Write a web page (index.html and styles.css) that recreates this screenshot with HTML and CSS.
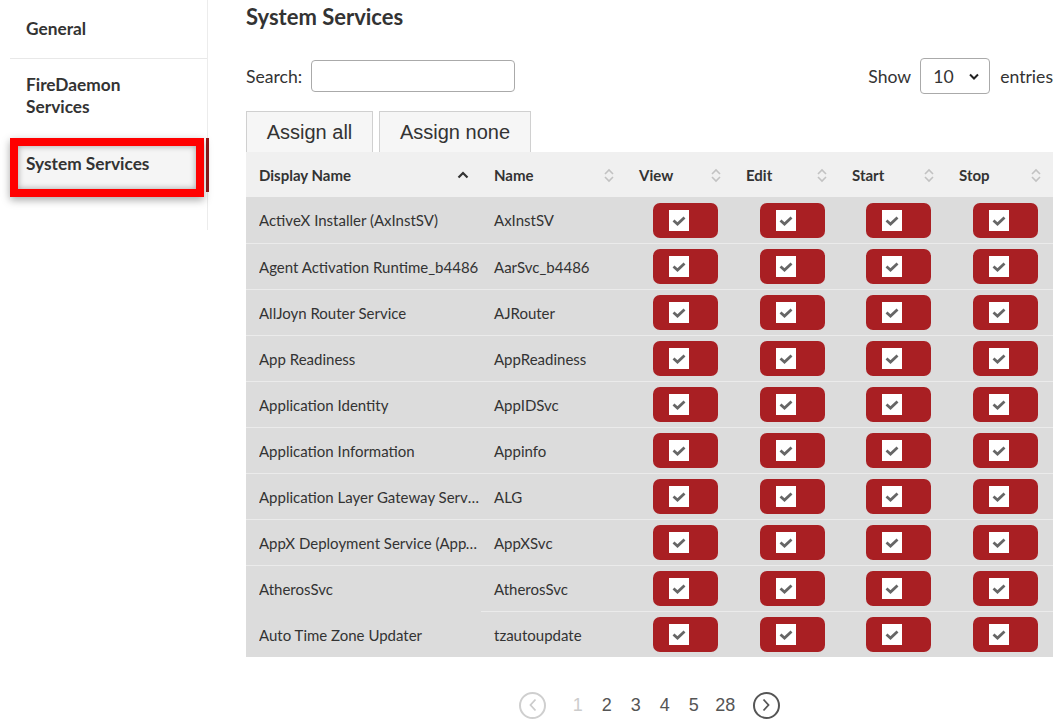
FILE: index.html
```html
<!DOCTYPE html>
<html>
<head>
<meta charset="utf-8">
<link rel="stylesheet" href="styles.css">
</head>
<body>
<div class="layout">
  <nav class="sidebar">
    <div class="nav-item nav-first">General</div>
    <div class="nav-item nav-second">FireDaemon<br>Services</div>
    <div class="nav-active-wrap">
      <div class="nav-active">System Services</div>
    </div>
  </nav>
  <main class="main">
    <h1 class="title">System Services</h1>
    <div class="toolbar">
      <label class="search">Search:<input class="search-input" type="text"></label>
      <div class="length">Show
        <div class="select-wrap">
          <select class="select"><option>10</option></select>
          <svg class="select-arrow" width="10" height="7" viewBox="0 0 10 7"><path d="M1 1.5 L5 5.5 L9 1.5" fill="none" stroke="#222" stroke-width="2"/></svg>
        </div>
        entries</div>
    </div>
    <div class="actions">
      <button class="btn btn-all">Assign all</button>
      <button class="btn btn-none">Assign none</button>
    </div>
    <table class="grid">
      <colgroup>
        <col class="c1"><col class="c2"><col class="c3"><col class="c4"><col class="c5"><col class="c6">
      </colgroup>
      <thead>
        <tr>
          <th class="h1"><div class="th"><span>Display Name</span><svg width="12" height="8" viewBox="0 0 12 8"><path d="M1.5 6.5 L6 2 L10.5 6.5" fill="none" stroke="#333" stroke-width="2.2"/></svg></div></th>
          <th><div class="th"><span>Name</span><svg class="sort" width="10" height="15" viewBox="0 0 10 15"><path d="M1 6 L5 2 L9 6 M1 9 L5 13 L9 9" fill="none" stroke="#c2c2c2" stroke-width="1.6"/></svg></div></th>
          <th><div class="th"><span>View</span><svg class="sort" width="10" height="15" viewBox="0 0 10 15"><path d="M1 6 L5 2 L9 6 M1 9 L5 13 L9 9" fill="none" stroke="#c2c2c2" stroke-width="1.6"/></svg></div></th>
          <th><div class="th"><span>Edit</span><svg class="sort" width="10" height="15" viewBox="0 0 10 15"><path d="M1 6 L5 2 L9 6 M1 9 L5 13 L9 9" fill="none" stroke="#c2c2c2" stroke-width="1.6"/></svg></div></th>
          <th><div class="th"><span>Start</span><svg class="sort" width="10" height="15" viewBox="0 0 10 15"><path d="M1 6 L5 2 L9 6 M1 9 L5 13 L9 9" fill="none" stroke="#c2c2c2" stroke-width="1.6"/></svg></div></th>
          <th><div class="th"><span>Stop</span><svg class="sort" width="10" height="15" viewBox="0 0 10 15"><path d="M1 6 L5 2 L9 6 M1 9 L5 13 L9 9" fill="none" stroke="#c2c2c2" stroke-width="1.6"/></svg></div></th>
        </tr>
      </thead>
      <tbody id="rows"></tbody>
    </table>
    <div class="pager">
      <span class="circle circle-prev"><svg width="10" height="14" viewBox="0 0 10 14"><path d="M7.5 1.5 L2.5 7 L7.5 12.5" fill="none" stroke="#ccc" stroke-width="1.8"/></svg></span>
      <span class="pg pg-off">1</span>
      <span class="pg">2</span>
      <span class="pg">3</span>
      <span class="pg">4</span>
      <span class="pg">5</span>
      <span class="pg pg-last">28</span>
      <span class="circle circle-next"><svg width="10" height="14" viewBox="0 0 10 14"><path d="M2.5 1.5 L7.5 7 L2.5 12.5" fill="none" stroke="#555" stroke-width="1.8"/></svg></span>
    </div>
  </main>
</div>
<script src="app.js"></script>
</body>
</html>
```
FILE: app.js
```js
var data = [
  ["ActiveX Installer (AxInstSV)", "AxInstSV"],
  ["Agent Activation Runtime_b4486", "AarSvc_b4486"],
  ["AllJoyn Router Service", "AJRouter"],
  ["App Readiness", "AppReadiness"],
  ["Application Identity", "AppIDSvc"],
  ["Application Information", "Appinfo"],
  ["Application Layer Gateway Service", "ALG"],
  ["AppX Deployment Service (AppXSVC)", "AppXSvc"],
  ["AtherosSvc", "AtherosSvc"],
  ["Auto Time Zone Updater", "tzautoupdate"]
];
var toggle = '<td><div class="toggle"><span class="cb"><svg width="20" height="21" viewBox="0 0 20 21"><path d="M4.5 10.5 L8.5 14 L15.5 7.5" fill="none" stroke="#666" stroke-width="2.8"/></svg></span></div></td>';
var html = "";
data.forEach(function (r, i) {
  html += '<tr class="' + (i === data.length - 1 ? "last" : "") + '"><td class="t1"><div class="ellip">' + r[0] + '</div></td><td class="t2">' + r[1] + '</td>' + toggle + toggle + toggle + toggle + '</tr>';
});
document.getElementById("rows").innerHTML = html;
```
FILE: styles.css
```css
html, body { margin: 0; padding: 0; background: #fff; }
body { font-family: Lato, "Open Sans", sans-serif; color: #333; }
.layout { display: flex; align-items: flex-start; }

.sidebar { width: 208px; box-sizing: border-box; border-right: 1px solid #ececec; min-height: 230px; }
.nav-item { font-weight: bold; font-size: 17.3px; line-height: 22px; color: #333; }
.nav-first { height: 59px; box-sizing: border-box; padding: 18px 0 0 16px; margin-left: 10px; border-bottom: 1px solid #e8e8e8; }
.nav-second { padding: 15px 0 20px 26px; }
.nav-active-wrap { padding-left: 10px; border-right: 3px solid #8e1b1b; margin-right: -2px; height: 54px; }
.nav-active { width: 194px; height: 59px; box-sizing: border-box; border: 8px solid #ff0000; background: #f5f5f5; box-shadow: inset 0 0 6px rgba(0,0,0,0.35), 0 3px 8px rgba(0,0,0,0.35); font-weight: bold; font-size: 17.3px; line-height: 22px; padding: 7px 0 0 8px; color: #333; position: relative; }

.main { margin-left: 38px; width: 807px; }
.title { margin: 0; font-size: 22px; line-height: 34px; font-weight: bold; color: #333; }

.toolbar { margin-top: 24px; height: 36px; display: flex; justify-content: space-between; align-items: center; font-size: 17.6px; }
.search { display: flex; align-items: center; }
.search-input { margin: 0 0 0 9px; width: 204px; height: 32px; box-sizing: border-box; border: 1px solid #aaa; border-radius: 4px; background: #fff; }
.length { display: flex; align-items: center; }
.select-wrap { position: relative; margin: 0 10px 0 9px; }
.select { appearance: none; -webkit-appearance: none; width: 70px; height: 36px; box-sizing: border-box; border: 1px solid #aaa; border-radius: 4px; background: #fff; font-family: Lato, sans-serif; font-size: 17.6px; color: #333; padding-left: 12px; }
.select-arrow { position: absolute; right: 11px; top: 15px; }

.actions { margin-top: 17px; display: flex; gap: 6px; height: 41px; }
.btn { height: 41px; box-sizing: border-box; border: 1px solid #d0d0d0; border-bottom: none; background: #f6f6f6; font-family: "Liberation Sans", Arial, sans-serif; font-size: 20px; color: #333; padding: 0; }
.btn-all { width: 127px; }
.btn-none { width: 152px; }

.grid { width: 807px; border-collapse: collapse; table-layout: fixed; font-size: 15px; }
.c1 { width: 235px; } .c2 { width: 145px; } .c3 { width: 107px; } .c4 { width: 106px; } .c5 { width: 107px; } .c6 { width: 107px; }
thead th { background: #f0f0f0; height: 45px; padding: 0 12px 0 13px; text-align: left; font-weight: bold; color: #333; }
.th { display: flex; justify-content: space-between; align-items: center; }
.th .sort { margin-top: 1px; }
tbody td { background: #dcdcdc; height: 45px; padding: 0 13px; border-top: 1px solid #ebebeb; color: #333; white-space: nowrap; }
tbody td.t1 { padding-right: 0; }
tbody tr:first-child td { border-top: none; height: 46px; }
tbody tr.last td.t1 { border-top-color: #dcdcdc; }
.ellip { overflow: hidden; text-overflow: ellipsis; white-space: nowrap; width: 222px; }
.toggle { margin-left: 14px; width: 65px; height: 35px; background: #a91f23; border-radius: 7px; box-sizing: border-box; padding: 7px 0 0 16px; }
.cb { display: block; width: 20px; height: 21px; background: #fff; }
.cb svg { display: block; }

.pager { display: flex; justify-content: center; align-items: center; margin-top: 34px; font-family: "Liberation Sans", Arial, sans-serif; font-size: 18px; color: #555; height: 28px; }
.circle { width: 27px; height: 27px; box-sizing: border-box; border-radius: 50%; display: flex; align-items: center; justify-content: center; }
.circle-prev { border: 2px solid #cfcfcf; margin-right: 17px; }
.circle-next { border: 2px solid #555; margin-left: 8px; }
.pg { padding: 0 9.5px; }
.pg-last { padding-left: 7px; }
.pg-off { color: #ccc; }
```
